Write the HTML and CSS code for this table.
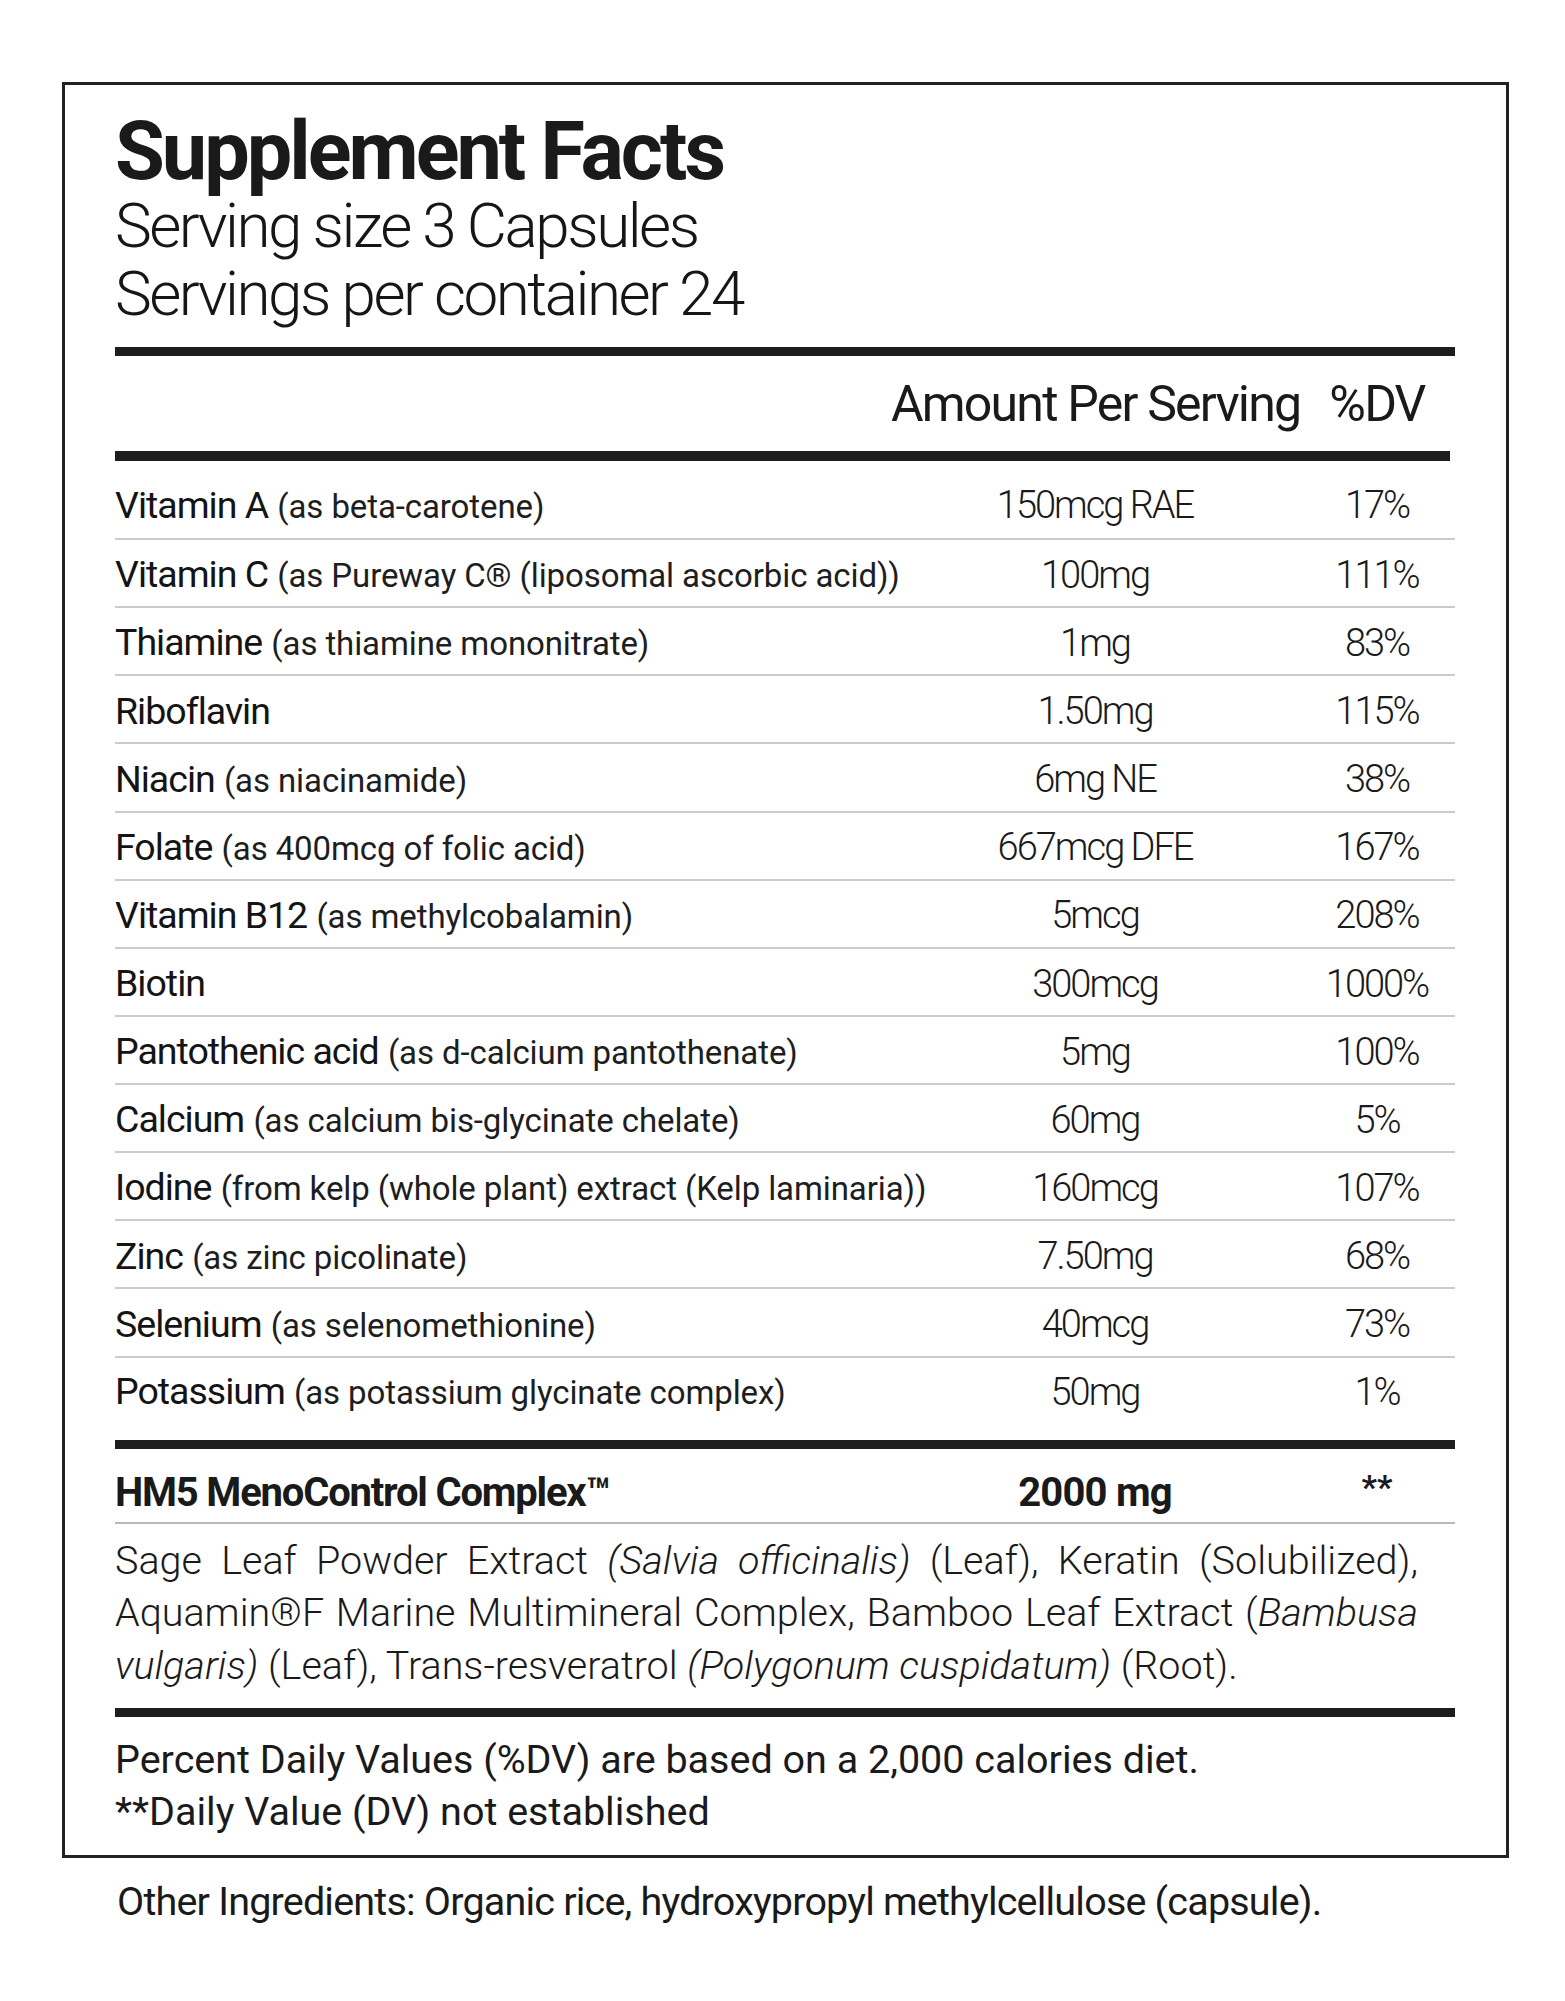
FILE: index.html
```html
<!DOCTYPE html>
<html lang="en">
<head>
<meta charset="utf-8">
<title>Supplement Facts</title>
<link rel="stylesheet" href="styles.css">
</head>
<body>
<main class="page">
  <section class="facts">
    <h1 class="title">Supplement Facts</h1>
    <div class="serving">
      <div>Serving size 3 Capsules</div>
      <div>Servings per container 24</div>
    </div>
    <div class="rule rule-1"></div>
    <div class="grid head">
      <div></div>
      <div class="c-amt">Amount Per Serving</div>
      <div class="c-dv">%DV</div>
    </div>
    <div class="rule rule-2"></div>
    <div class="rows">
      <div class="grid row first"><div class="c-name"><span class="nm">Vitamin A</span> <span class="sub">(as beta-carotene)</span></div><div class="c-amt v">150mcg RAE</div><div class="c-dv v">17%</div></div>
      <div class="grid row"><div class="c-name"><span class="nm">Vitamin C</span> <span class="sub">(as Pureway C® (liposomal ascorbic acid))</span></div><div class="c-amt v">100mg</div><div class="c-dv v">111%</div></div>
      <div class="grid row"><div class="c-name"><span class="nm">Thiamine</span> <span class="sub">(as thiamine mononitrate)</span></div><div class="c-amt v">1mg</div><div class="c-dv v">83%</div></div>
      <div class="grid row"><div class="c-name"><span class="nm">Riboflavin</span></div><div class="c-amt v">1.50mg</div><div class="c-dv v">115%</div></div>
      <div class="grid row"><div class="c-name"><span class="nm">Niacin</span> <span class="sub">(as niacinamide)</span></div><div class="c-amt v">6mg NE</div><div class="c-dv v">38%</div></div>
      <div class="grid row"><div class="c-name"><span class="nm">Folate</span> <span class="sub">(as 400mcg of folic acid)</span></div><div class="c-amt v">667mcg DFE</div><div class="c-dv v">167%</div></div>
      <div class="grid row"><div class="c-name"><span class="nm">Vitamin B12</span> <span class="sub">(as methylcobalamin)</span></div><div class="c-amt v">5mcg</div><div class="c-dv v">208%</div></div>
      <div class="grid row"><div class="c-name"><span class="nm">Biotin</span></div><div class="c-amt v">300mcg</div><div class="c-dv v">1000%</div></div>
      <div class="grid row"><div class="c-name"><span class="nm">Pantothenic acid</span> <span class="sub">(as d-calcium pantothenate)</span></div><div class="c-amt v">5mg</div><div class="c-dv v">100%</div></div>
      <div class="grid row"><div class="c-name"><span class="nm">Calcium</span> <span class="sub">(as calcium bis-glycinate chelate)</span></div><div class="c-amt v">60mg</div><div class="c-dv v">5%</div></div>
      <div class="grid row"><div class="c-name"><span class="nm">Iodine</span> <span class="sub">(from kelp (whole plant) extract (Kelp laminaria))</span></div><div class="c-amt v">160mcg</div><div class="c-dv v">107%</div></div>
      <div class="grid row"><div class="c-name"><span class="nm">Zinc</span> <span class="sub">(as zinc picolinate)</span></div><div class="c-amt v">7.50mg</div><div class="c-dv v">68%</div></div>
      <div class="grid row"><div class="c-name"><span class="nm">Selenium</span> <span class="sub">(as selenomethionine)</span></div><div class="c-amt v">40mcg</div><div class="c-dv v">73%</div></div>
      <div class="grid row last"><div class="c-name"><span class="nm">Potassium</span> <span class="sub">(as potassium glycinate complex)</span></div><div class="c-amt v">50mg</div><div class="c-dv v">1%</div></div>
    </div>
    <div class="rule rule-3"></div>
    <div class="grid blend-row">
      <div class="c-name blend-name">HM5 MenoControl Complex™</div>
      <div class="c-amt blend-amt">2000 mg</div>
      <div class="c-dv blend-dv">**</div>
    </div>
    <p class="blend">
      <span class="line">Sage Leaf Powder Extract <i>(Salvia officinalis)</i> (Leaf), Keratin (Solubilized),</span>
      <span class="line">Aquamin®F Marine Multimineral Complex, Bamboo Leaf Extract (<i>Bambusa</i></span>
      <span class="line end"><i>vulgaris)</i> (Leaf), Trans-resveratrol <i>(Polygonum cuspidatum)</i> (Root).</span>
    </p>
    <div class="rule rule-4"></div>
    <div class="notes">
      <div>Percent Daily Values (%DV) are based on a 2,000 calories diet.</div>
      <div>**Daily Value (DV) not established</div>
    </div>
  </section>
  <p class="other">Other Ingredients: Organic rice, hydroxypropyl methylcellulose (capsule).</p>
</main>
</body>
</html>
```

FILE: styles.css
```css
html, body {
  margin: 0;
  padding: 0;
  background: #ffffff;
}

body {
  font-family: Roboto, "Liberation Sans", Arial, sans-serif;
  color: #1c1c1c;
}

.page {
  padding: 82px 0 0 62px;
}

.facts {
  width: 1447px;
  box-sizing: border-box;
  border: 3px solid #222222;
  padding: 26px 51px 17px 50px;
}

.title {
  margin: 0;
  font-size: 81px;
  line-height: 81px;
  font-weight: 700;
  letter-spacing: -3px;
  color: #1a1a1a;
}

.serving {
  font-size: 62px;
  line-height: 68px;
  font-weight: 300;
  letter-spacing: -2.5px;
  color: #161616;
}

.rule {
  background: #1e1e1e;
  height: 9px;
}

.rule-1 { margin-top: 19px; }
.rule-2 { margin-top: 22px; height: 10px; margin-right: 5px; }
.rule-3 { height: 9px; }
.rule-4 { margin-top: 15.5px; }

.grid {
  display: grid;
  grid-template-columns: minmax(0, 1fr) 408px 156px;
  white-space: nowrap;
}

.c-amt, .c-dv {
  text-align: center;
}

.head {
  margin-top: 23px;
  font-size: 50px;
  line-height: 50px;
  font-weight: 400;
  letter-spacing: -1.8px;
  color: #1a1a1a;
}

.row {
  height: 68.14px;
  box-sizing: border-box;
  border-bottom: 2px solid #cbcbcb;
  align-items: end;
  padding-bottom: 12.3px;
  line-height: 1;
}

.row.first {
  height: 79px;
  padding-bottom: 14px;
}

.row.last {
  height: 82px;
  border-bottom: none;
  padding-bottom: 29px;
}

.c-name {
  font-size: 37px;
}

.nm {
  font-size: 37.5px;
  font-weight: 400;
  letter-spacing: -1px;
  color: #141414;
}

.sub {
  font-size: 33px;
  font-weight: 400;
  letter-spacing: -0.1px;
  color: #1e1e1e;
}

.v {
  font-size: 38px;
  font-weight: 300;
  letter-spacing: -2px;
  color: #1a1a1a;
}

.blend-row {
  height: 75px;
  box-sizing: border-box;
  border-bottom: 2px solid #b9b9b9;
  align-items: end;
  padding-bottom: 8.7px;
  line-height: 1;
  font-weight: 700;
  color: #1a1a1a;
}

.blend-name {
  font-size: 40px;
  letter-spacing: -1.2px;
}

.blend-amt {
  font-size: 40px;
  letter-spacing: -0.8px;
}

.blend-dv {
  font-size: 34px;
  align-self: start;
  padding-top: 21px;
}

.blend {
  margin: 11px 37px 0 0;
  font-size: 39.5px;
  line-height: 52.5px;
  font-weight: 300;
  color: #1a1a1a;
}

.blend .line {
  display: block;
  text-align: justify;
  text-align-last: justify;
}

.blend .line.end {
  text-align-last: left;
}

.notes {
  margin-top: 17px;
  font-size: 39.5px;
  line-height: 52px;
  font-weight: 400;
  color: #1a1a1a;
}

.other {
  margin: 18px 0 0 55px;
  font-size: 39.5px;
  line-height: 52px;
  font-weight: 400;
  letter-spacing: -0.8px;
  color: #1a1a1a;
}
```
